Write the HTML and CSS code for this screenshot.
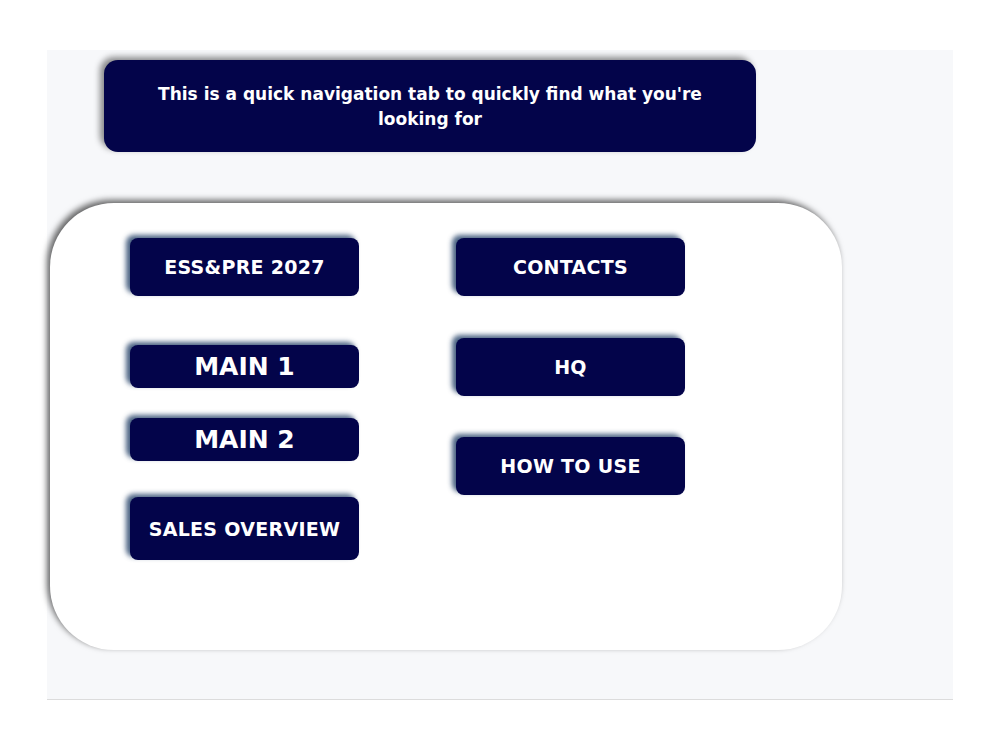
FILE: index.html
```html
<!DOCTYPE html>
<html lang="en">
<head>
    <meta charset="UTF-8">
    <meta name="viewport" content="width=device-width, initial-scale=1.0">
    <title>Quick Navigation</title>
    <link rel="stylesheet" href="styles.css">
</head>
<body>
    <div class="panel">
        <div class="intro">
            This is a quick navigation tab to quickly find what you're<br>
            looking for
        </div>
        <div class="card">
            <div class="col">
                <a class="nav-btn" href="#">ESS&amp;PRE 2027</a>
                <a class="nav-btn big main1" href="#">MAIN 1</a>
                <a class="nav-btn big main2" href="#">MAIN 2</a>
                <a class="nav-btn tall sales" href="#">SALES OVERVIEW</a>
            </div>
            <div class="col">
                <a class="nav-btn" href="#">CONTACTS</a>
                <a class="nav-btn hq" href="#">HQ</a>
                <a class="nav-btn howto" href="#">HOW TO USE</a>
            </div>
        </div>
    </div>
</body>
</html>
```

FILE: styles.css
```css
body {
    margin: 0;
    background-color: white;
    font-family: "DejaVu Sans", "Liberation Sans", sans-serif;
}
.panel {
    margin: 50px 47px 0;
    height: 650px;
    box-sizing: border-box;
    padding-top: 10px;
    background-color: #f7f8fa;
    border-bottom: 1px solid #dcdcdc;
}
.intro {
    margin-left: 57px;
    width: 652px;
    height: 92px;
    box-sizing: border-box;
    padding-top: 22px;
    background-color: #03044a;
    color: white;
    border-radius: 14px;
    box-shadow: -4px -3px 6px rgba(0, 0, 0, 0.45);
    text-align: center;
    font-weight: bold;
    font-size: 17px;
    line-height: 25px;
}
.card {
    margin: 51px 0 0 3px;
    width: 792px;
    height: 447px;
    box-sizing: border-box;
    padding: 35px 0 0 80px;
    background-color: white;
    border-radius: 64px;
    box-shadow: -3px -3px 6px rgba(0, 0, 0, 0.6);
    display: flex;
    gap: 97px;
}
.col {
    display: flex;
    flex-direction: column;
    width: 229px;
}
.nav-btn {
    display: flex;
    align-items: center;
    justify-content: center;
    height: 58px;
    background-color: #03044a;
    color: white;
    text-decoration: none;
    border-radius: 8px;
    box-shadow: -4px -3px 5px rgba(30, 60, 100, 0.8);
    font-weight: bold;
    font-size: 19px;
    letter-spacing: 0.3px;
}
.nav-btn.big {
    height: 43px;
    font-size: 25px;
    letter-spacing: 0;
}
.nav-btn.tall {
    height: 63px;
}
.main1 { margin-top: 49px; }
.main2 { margin-top: 30px; }
.sales { margin-top: 36px; }
.hq { margin-top: 42px; }
.howto { margin-top: 41px; }
```
